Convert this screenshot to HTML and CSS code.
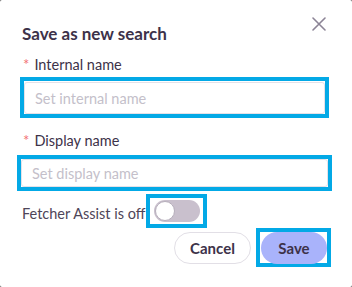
FILE: index.html
```html
<!DOCTYPE html>
<html>
<head>
<meta charset="utf-8">
<link rel="stylesheet" href="styles.css">
</head>
<body>
<div class="dialog">
  <div class="header">
    <h1 class="title">Save as new search</h1>
    <button class="close" aria-label="Close">
      <svg width="14" height="14" viewBox="0 0 14 14"><path d="M1 1L13 13M13 1L1 13" stroke="#8c8496" stroke-width="1.6" fill="none" stroke-linecap="round"/></svg>
    </button>
  </div>
  <label class="label"><span class="req">*</span>Internal name</label>
  <div class="hl hl-input1"><input class="input" placeholder="Set internal name"></div>
  <label class="label label2"><span class="req">*</span>Display name</label>
  <div class="hl hl-input2"><input class="input" placeholder="Set display name"></div>
  <div class="assist">
    <span class="assist-text">Fetcher Assist is off</span>
    <div class="hl hl-toggle"><span class="toggle"><span class="knob"></span></span></div>
  </div>
  <div class="actions">
    <button class="btn cancel">Cancel</button>
    <div class="hl hl-save"><button class="btn save">Save</button></div>
  </div>
</div>
</body>
</html>
```
FILE: styles.css
```css
html, body { margin: 0; padding: 0; background: #5a5a5a; }
body { width: 352px; height: 287px; overflow: hidden; font-family: Lato, "Open Sans", sans-serif; }
.dialog {
  background: #fff;
  width: 352px;
  height: 287px;
  box-sizing: border-box;
  border-radius: 2px;
  padding: 14px 20px 0 22px;
}
.header { display: flex; justify-content: space-between; align-items: flex-start; }
.title { margin: 9px 0 0 0; font-size: 17px; font-weight: 700; color: #3d3249; }
.close { border: 0; background: none; padding: 0; margin: 3px 6px 0 0; width: 14px; height: 14px; display: flex; }
.label { display: block; margin-top: 11px; font-size: 14.5px; color: #3d3249; line-height: 18px; }
.label2 { margin-top: 13px; }
.req { color: #f27272; font-size: 15px; margin-right: 5px; margin-left: 1px; }
.hl { border: 4px solid #03a9e6; box-sizing: border-box; }
.hl-input1 { margin: 3px 0 0 -2px; width: 309px; padding: 0; height: 41px; }
.hl-input2 { margin: 5px 0 0 -5px; width: 315px; height: 36px; }
.input {
  display: block;
  width: 100%;
  height: 100%;
  box-sizing: border-box;
  border: 1px solid #e4e1e8;
  border-radius: 3px;
  font-family: inherit;
  font-size: 14.5px;
  color: #3d3249;
  padding: 0 10px;
  outline: none;
}
.hl-input1 .input { margin: 1px 0 0 0; height: 32px; }
.input::placeholder { color: #c4bfca; }
.assist { display: flex; align-items: center; margin-top: 3px; }
.assist-text { font-size: 14.5px; color: #4e4558; position: relative; top: 2px; }
.hl-toggle { margin-left: 1px; width: 61px; height: 34px; display: flex; align-items: center; justify-content: center; }
.toggle { display: block; position: relative; width: 46px; height: 22px; border-radius: 11px; background: #c9c0cd; }
.knob { position: absolute; left: 1px; top: 1px; width: 20px; height: 20px; border-radius: 50%; background: #fff; border: 1px solid #b6aebb; box-sizing: border-box; }
.actions { display: flex; justify-content: flex-end; align-items: center; margin-top: 0; margin-right: 1px; gap: 5px; }
.btn { font-family: inherit; font-size: 15px; font-weight: 700; color: #3d3249; border-radius: 16px; height: 32px; cursor: pointer; }
.cancel { background: #fff; border: 1px solid #e2dfe6; width: 77px; }
.hl-save { width: 75px; height: 39px; display: flex; align-items: center; justify-content: flex-end; padding-right: 0; }
.save { background: #a9b3fb; border: 0; width: 66px; margin-right: 0; }
```
